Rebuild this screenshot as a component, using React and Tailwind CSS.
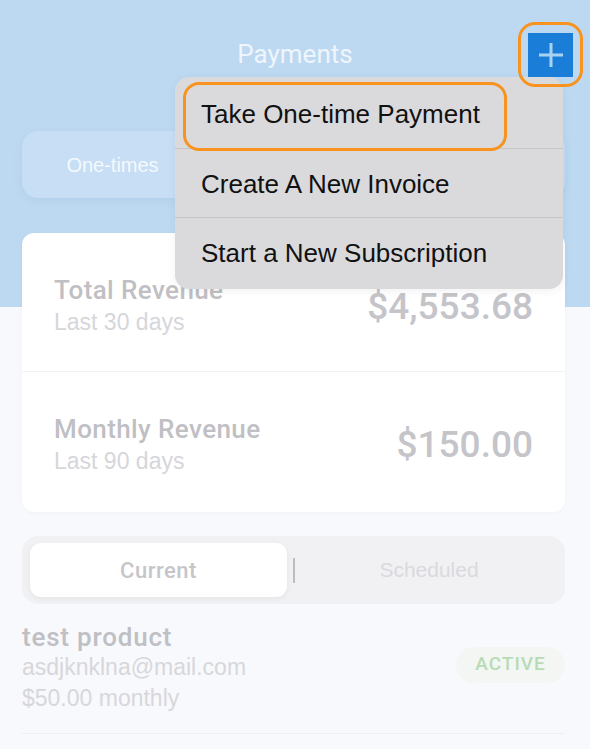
import React from 'react'

const font = { fontFamily: '"Liberation Sans", Arial, sans-serif' }
const medium = { fontFamily: 'Roboto, "Liberation Sans", Arial, sans-serif' }

const PlusButton = () => (
    <div className="relative z-20 justify-self-end mr-[7px] w-[65px] h-[65px] rounded-[17px] border-[3.5px] border-[#F7931E] flex items-center justify-center">
        <div className="w-[45px] h-[44px] bg-[#1A7ED9] flex items-center justify-center">
            <svg width="26" height="26" viewBox="0 0 26 26">
                <path d="M13 1v24M1 13h24" stroke="#A9D1F2" strokeWidth="3" />
            </svg>
        </div>
    </div>
)

const ActionMenu = () => (
    <div className="absolute z-10 left-[175px] top-[77px] w-[388px] bg-[#DADADC] rounded-[14px] shadow-[0_2px_10px_rgba(0,0,0,0.06)]">
        {/* highlighted first option */}
        <div className="absolute left-[8px] top-[5px] w-[324px] h-[69px] rounded-[16px] border-[3.5px] border-[#F7931E]"></div>
        <div className="h-[72px] pt-[4px] flex items-center pl-[26px] text-[26px] text-[#111] border-b border-[#C6C6C8]">Take One-time Payment</div>
        <div className="h-[69px] pt-[2px] flex items-center pl-[26px] text-[26px] text-[#111] border-b border-[#C6C6C8]">Create A New Invoice</div>
        <div className="h-[71px] flex items-center pl-[26px] text-[26px] text-[#111]">Start a New Subscription</div>
    </div>
)

const RevenueRow = ({ title, sub, amount, last }) => (
    <div className={`flex items-center justify-between px-[32px] ${last ? 'h-[140px] pt-[5px]' : 'h-[139px] pt-[8px] border-b border-[#F1F2F5]'}`}>
        <div className="flex flex-col">
            <span style={medium} className="text-[26px] leading-[32px] tracking-[0.4px] font-medium text-[#BFBFC4]">{title}</span>
            <span className="text-[23px] leading-[32px] text-[#D6D6DA]">{sub}</span>
        </div>
        <span style={medium} className="mt-[1px] text-[37px] font-medium text-[#C4C4C9]">{amount}</span>
    </div>
)

const App = () => {
    return (
        <div style={font} className="relative w-[590px] h-[749px] overflow-hidden bg-[linear-gradient(to_bottom,#BDD9F1_307px,#F8F9FC_307px)]">

            {/* Header */}
            <div className="grid grid-cols-[1fr_auto_1fr] items-center pt-[22px]">
                <div></div>
                <h1 style={medium} className="text-[26px] text-[#EEF5FC]">Payments</h1>
                <PlusButton />
            </div>

            <ActionMenu />

            <div className="pl-[22px] pr-[25px]">

                {/* Type tabs */}
                <div className="mt-[44px] h-[67px] grid grid-cols-3 items-center bg-[#C7DEF4] rounded-[16px] shadow-[0_3px_8px_rgba(120,160,200,0.15)]">
                    <span className="text-center text-[20px] text-[#F4F9FE]">One-times</span>
                    <span></span>
                    <span></span>
                </div>

                {/* Revenue cards */}
                <div className="mt-[35px] bg-white rounded-[12px] shadow-[0_1px_4px_rgba(0,0,0,0.03)]">
                    <RevenueRow title="Total Revenue" sub="Last 30 days" amount="$4,553.68" />
                    <RevenueRow title="Monthly Revenue" sub="Last 90 days" amount="$150.00" last />
                </div>

                {/* Status tabs */}
                <div className="mt-[24px] h-[68px] flex items-center px-[8px] bg-[#F1F1F4] rounded-[16px]">
                    <div style={medium} className="w-[257px] h-[54px] bg-white rounded-[11px] shadow-[0_2px_6px_rgba(0,0,0,0.05)] flex items-center justify-center text-[22px] tracking-[0.5px] font-medium text-[#C5C5CA]">
                        Current
                    </div>
                    <div className="mx-[6px] w-[2px] h-[25px] bg-[#BDBDC1]"></div>
                    <div className="flex-1 text-center text-[21px] text-[#D9D9DD]">Scheduled</div>
                </div>

                {/* Subscription row */}
                <div className="mt-[18px] pb-[20px] flex items-center justify-between border-b border-[#F0F0F3]">
                    <div className="flex flex-col">
                        <span style={medium} className="text-[26px] leading-[30px] tracking-[0.8px] font-medium text-[#BFBFC4]">test product</span>
                        <span className="text-[23px] leading-[31px] text-[#D7D7DB]">asdjknklna@mail.com</span>
                        <span className="text-[23px] leading-[30px] text-[#D7D7DB]">$50.00 monthly</span>
                    </div>
                    <span style={medium} className="mb-[6px] w-[109px] h-[36px] rounded-full bg-[#F3F6F3] flex items-center justify-center text-[19px] tracking-[1px] font-medium text-[#B7DCB5]">
                        ACTIVE
                    </span>
                </div>

            </div>
        </div>
    )
}

export default App
